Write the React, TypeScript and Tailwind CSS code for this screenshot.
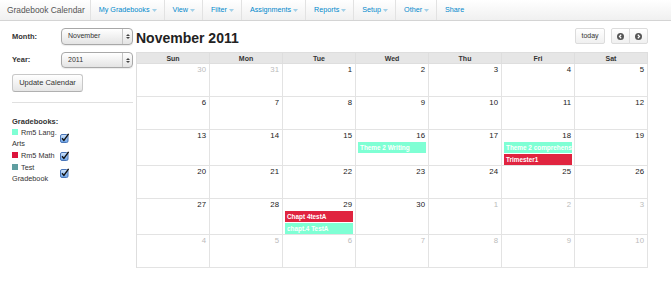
import React from "react";

type Ev = { title: string; color: string };
type Day = { n: number; other?: boolean; events?: Ev[] };

const AQUA = "bg-[#7fffd4]";
const RED = "bg-[#e0243f]";

const navItems = ["My Gradebooks", "View", "Filter", "Assignments", "Reports", "Setup", "Other", "Share"];

const eventsByDay: Record<number, Ev[]> = {
  16: [{ title: "Theme 2 Writing", color: AQUA }],
  18: [
    { title: "Theme 2 comprehension", color: AQUA },
    { title: "Trimester1", color: RED },
  ],
  29: [
    { title: "Chapt 4testA", color: RED },
    { title: "chapt.4 TestA", color: AQUA },
  ],
};

function buildWeeks(): Day[][] {
  const days: Day[] = [{ n: 30, other: true }, { n: 31, other: true }];
  for (let i = 1; i <= 30; i++) days.push({ n: i, events: eventsByDay[i] });
  for (let i = 1; i <= 10; i++) days.push({ n: i, other: true });
  const weeks: Day[][] = [];
  for (let w = 0; w < 6; w++) weeks.push(days.slice(w * 7, w * 7 + 7));
  return weeks;
}

function Caret() {
  return (
    <svg width="5" height="3" viewBox="0 0 5 3" className="ml-[2px] inline-block">
      <path d="M0 0 L5 0 L2.5 3 Z" fill="#0088cc" opacity="0.35" />
    </svg>
  );
}

function Navbar() {
  return (
    <div className="flex h-[21px] items-stretch border-b border-[#d4d4d4] bg-gradient-to-b from-white to-[#f0f0f0] text-[7.2px]">
      <div className="flex items-center pl-[7px] pr-[5px] text-[8.4px] text-[#555]">Gradebook Calendar</div>
      {navItems.map((item, i) => (
        <React.Fragment key={item}>
          <div className="w-px bg-[#e2e2e2]" />
          <div className="flex items-center pl-[8px] pr-[7px] text-[#0088cc]">
            {item}
            {i < navItems.length - 1 && <Caret />}
          </div>
        </React.Fragment>
      ))}
    </div>
  );
}

function FakeSelect({ value, h }: { value: string; h: string }) {
  return (
    <div
      className={`flex w-[72px] ${h} items-center rounded-[4px] border border-[#a8a8a8] bg-gradient-to-b from-white to-[#e4e4e4] shadow-[0_1px_1px_rgba(0,0,0,0.08)]`}
    >
      <span className="flex-1 pl-[6px] text-[7px] text-[#333]">{value}</span>
      <span className="flex h-full w-[10px] flex-col items-center justify-center gap-[1px] border-l border-[#c4c4c4]">
        <svg width="4" height="2" viewBox="0 0 4 2">
          <path d="M0 2 L4 2 L2 0 Z" fill="#444" />
        </svg>
        <svg width="4" height="2" viewBox="0 0 4 2">
          <path d="M0 0 L4 0 L2 2 Z" fill="#444" />
        </svg>
      </span>
    </div>
  );
}

function Check() {
  return (
    <svg width="9" height="10" viewBox="0 0 9 10" className="shrink-0">
      <defs>
        <linearGradient id="cb" x1="0" y1="0" x2="0" y2="1">
          <stop offset="0" stopColor="#d4e6fb" />
          <stop offset="1" stopColor="#6aa3e8" />
        </linearGradient>
      </defs>
      <rect x="0.5" y="1.5" width="7.5" height="8" rx="1.5" fill="url(#cb)" stroke="#4a76b8" />
      <path d="M2 5.2 L3.9 7.4 L8.6 0.8" fill="none" stroke="#111" strokeWidth="1.4" />
    </svg>
  );
}

function Sidebar() {
  const books = [
    { name: "Rm5 Lang. Arts", color: "bg-[#7fffd4]" },
    { name: "Rm5 Math", color: "bg-[#dc143c]" },
    { name: "Test Gradebook", color: "bg-[#5f9ea0]" },
  ];
  return (
    <div className="w-[133px] shrink-0 pl-[12px] pt-[7px]">
      <div className="flex h-[17px] items-center">
        <span className="w-[49px] text-[7.5px] font-bold text-[#333]">Month:</span>
        <FakeSelect value="November" h="h-[17px]" />
      </div>
      <div className="mt-[7px] flex h-[16px] items-center">
        <span className="w-[49px] text-[7.5px] font-bold text-[#333]">Year:</span>
        <FakeSelect value="2011" h="h-[16px]" />
      </div>
      <button className="mt-[6px] flex h-[18px] w-[71px] items-center justify-center rounded-[3px] border border-[#c8c8c8] border-b-[#b0b0b0] bg-gradient-to-b from-white to-[#e6e6e6] text-[7.5px] text-[#333]">
        Update Calendar
      </button>
      <div className="mt-[10px] border-t border-[#e0e0e0]" />
      <div className="mt-[13px] text-[7.5px] font-bold leading-[11px] text-[#333]">Gradebooks:</div>
      <div className="flex flex-col gap-[1px]">
        {books.map((b) => (
          <div key={b.name} className="flex items-center">
            <div className="w-[47px] text-[7.3px] leading-[11px] text-[#333]">
              <span className={`mr-[3px] inline-block h-[6px] w-[6px] ${b.color}`} />
              {b.name}
            </div>
            <span className="ml-[1px]">
              <Check />
            </span>
          </div>
        ))}
      </div>
    </div>
  );
}

function CircleArrow({ dir }: { dir: "l" | "r" }) {
  return (
    <svg width="7" height="7" viewBox="0 0 8 8">
      <circle cx="4" cy="4" r="4" fill="#555" />
      {dir === "l" ? (
        <path d="M4.8 2 L2.8 4 L4.8 6" fill="none" stroke="#fff" strokeWidth="1.3" />
      ) : (
        <path d="M3.2 2 L5.2 4 L3.2 6" fill="none" stroke="#fff" strokeWidth="1.3" />
      )}
    </svg>
  );
}

function Calendar() {
  const weeks = buildWeeks();
  const heads = ["Sun", "Mon", "Tue", "Wed", "Thu", "Fri", "Sat"];
  return (
    <div className="ml-[3px] w-[512px] pt-[7px]">
      <div className="flex h-[16px] items-start justify-between">
        <h1 className="mt-[2px] text-[14px] font-bold leading-[16px] text-[#222]">November 2011</h1>
        <div className="flex items-start">
          <button className="flex h-[16px] w-[30px] items-center justify-center rounded-[2px] border border-[#dcdcdc] bg-gradient-to-b from-white to-[#f0f0f0] text-[7px] text-[#333]">
            today
          </button>
          <div className="ml-[6px] flex h-[16px]">
            <button className="flex h-[16px] w-[19px] items-center justify-center rounded-l-[2px] border border-[#dcdcdc] bg-gradient-to-b from-white to-[#f0f0f0]">
              <CircleArrow dir="l" />
            </button>
            <button className="-ml-px flex h-[16px] w-[19px] items-center justify-center rounded-r-[2px] border border-[#dcdcdc] bg-gradient-to-b from-white to-[#f0f0f0]">
              <CircleArrow dir="r" />
            </button>
          </div>
        </div>
      </div>
      <div className="mt-[8px] grid grid-cols-7 border-l border-t border-[#dedede]">
        {heads.map((h) => (
          <div
            key={h}
            className="h-[11px] border-b border-r border-[#dedede] bg-[#e6e6e6] text-center text-[7px] font-bold leading-[11px] text-[#333]"
          >
            {h}
          </div>
        ))}
        {weeks.map((week, wi) =>
          week.map((d) => (
            <div
              key={`${wi}-${d.n}`}
              className="flex min-h-[33px] flex-col gap-px overflow-hidden border-b border-r border-[#e3e3e3]"
            >
              <div
                className={`-mb-px h-[12px] pr-[3px] text-right text-[7.8px] leading-[12px] ${
                  d.other ? "text-[#bbb]" : "text-[#222]"
                }`}
              >
                {d.n}
              </div>
              {d.events?.map((e) => (
                <div
                  key={e.title}
                  className={`mx-[2px] h-[11px] shrink-0 overflow-hidden whitespace-nowrap px-[2px] text-[6.4px] font-bold leading-[11px] text-white ${e.color}`}
                >
                  {e.title}
                </div>
              ))}
            </div>
          ))
        )}
      </div>
    </div>
  );
}

export default function App() {
  return (
    <div className="h-[291px] w-[671px] bg-white font-['Liberation_Sans',Arial,sans-serif]">
      <Navbar />
      <div className="flex">
        <Sidebar />
        <Calendar />
      </div>
    </div>
  );
}
